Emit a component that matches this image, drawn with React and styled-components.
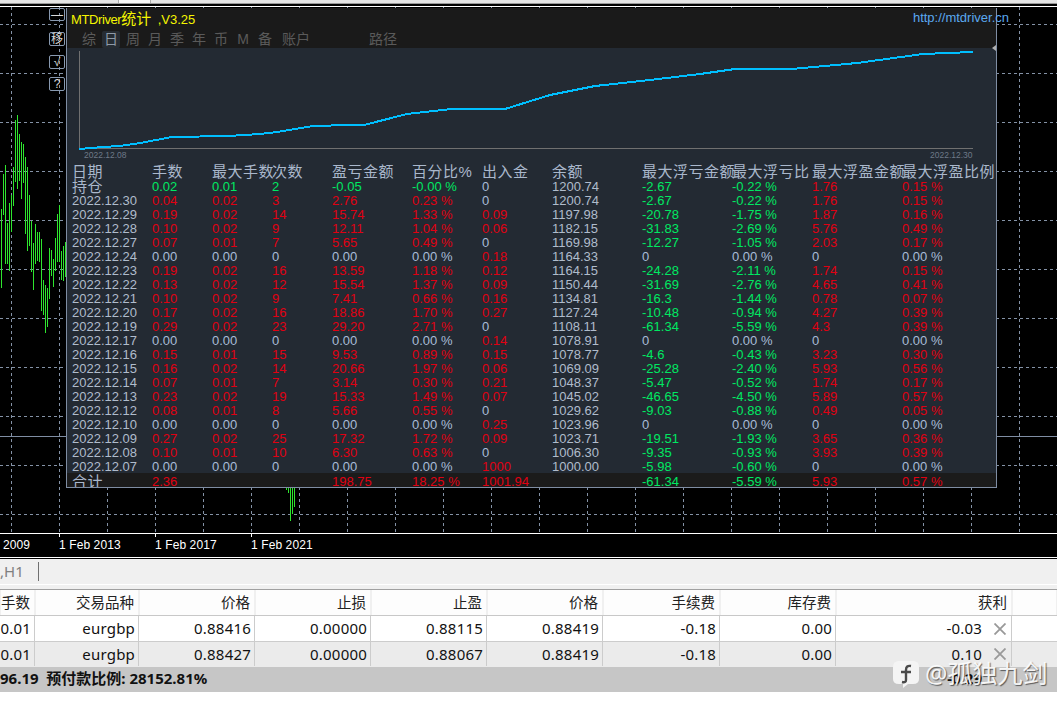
import React from 'react';
import styled, { createGlobalStyle } from 'styled-components';

const GlobalStyle = createGlobalStyle`
    html, body {
        margin: 0;
        padding: 0;
        background: #ffffff;
    }
`;

const PANEL_FONT = `"Liberation Sans", "Noto Sans CJK SC", sans-serif`;
const TABLE_FONT = `"Noto Sans", "Noto Sans CJK SC", sans-serif`;

const Page = styled.div`
    position: relative;
    width: 1057px;
    height: 716px;
    overflow: hidden;
    background: #ffffff;
`;

const TopStrip = styled.div`
    height: 3px;
    background: #e4e4e4;
    border-bottom: 1px solid #999999;
`;

const TopTab = styled.div`
    width: 31px;
    height: 3px;
    margin-left: 118px;
    background: #f8f8f8;
    border-left: 1px solid #aaaaaa;
    border-right: 1px solid #aaaaaa;
`;

const Rule = styled.div`
    height: ${props => props.$h}px;
    background: ${props => props.$color};
`;

const ChartArea = styled.div`
    position: relative;
    height: 526px;
    background: #000000;

    > svg {
        display: block;
    }
`;

const SideButtons = styled.div`
    position: absolute;
    top: 1px;
    left: 49px;
    display: flex;
    flex-direction: column;
`;

const SideButton = styled.div`
    box-sizing: border-box;
    width: 16px;
    height: ${props => props.$h || 14}px;
    margin-bottom: ${props => props.$gap}px;
    display: flex;
    align-items: center;
    justify-content: center;
    border: 1px solid #8899b0;
    border-radius: 2px;
    color: #d8d8d8;
    font: 12px/1 ${PANEL_FONT};
`;

const Panel = styled.div`
    position: absolute;
    top: 1px;
    left: 66px;
    box-sizing: border-box;
    width: 931px;
    height: 480px;
    display: flex;
    flex-direction: column;
    background: #232a33;
    border: 1px solid #7f8da3;
    border-top: none;
    font-family: ${PANEL_FONT};
`;

const PanelHead = styled.div`
    height: 40px;
    flex: none;
    background: #1a1a1a;
`;

const TitleRow = styled.div`
    height: 18px;
    display: flex;
    align-items: center;
    justify-content: space-between;
    padding-left: 4px;
`;

const Title = styled.div`
    color: #f5f500;
    font-size: 13px;
    letter-spacing: -0.4px;
    white-space: pre;

    span {
        font-size: 15px;
        letter-spacing: 0;
    }

    b {
        font-weight: 400;
        letter-spacing: 0;
    }
`;

const SiteLink = styled.div`
    margin-right: -13px;
    color: #5aa9f0;
    font-size: 13px;
`;

const Tabs = styled.div`
    display: flex;
    height: 17px;
    margin-top: 5px;
    padding-left: 11px;
`;

const Tab = styled.div`
    width: ${props => props.$w || 18}px;
    margin-left: ${props => props.$ml || 2}px;
    margin-right: 2px;
    text-align: center;
    font-size: 14px;
    line-height: 17px;
    border-radius: 2px;
    color: ${props => props.$active ? '#8e9aa8' : '#5a5a5a'};
    background: ${props => props.$active ? '#262c33' : 'transparent'};
`;

const CurveWrap = styled.div`
    height: 116px;
    flex: none;

    svg {
        display: block;
    }
`;

const Corner = styled.div`
    position: absolute;
    top: 37px;
    right: 0;
    width: 0;
    height: 0;
    border-top: 3px solid transparent;
    border-bottom: 3px solid transparent;
    border-right: 4px solid #b0b0b0;
`;

const GRID_COLS = '80px 60px 60px 60px 80px 70px 70px 90px 90px 80px 90px 1fr';

const StatRow = styled.div`
    flex: none;
    display: grid;
    grid-template-columns: ${GRID_COLS};
    height: ${props => props.$h || 14}px;
    line-height: ${props => props.$h || 14}px;
    padding-left: 5px;
    font-size: 13px;
    white-space: nowrap;
`;

const TotalRow = styled(StatRow)`
    box-sizing: border-box;
    height: 14px;
    margin-top: -1px;
    padding-top: 2px;
    overflow: hidden;
    background: #1b1b1b;
`;

const HeadCell = styled.div`
    min-width: 0;
    font-size: 15px;
    letter-spacing: 0.5px;
    color: #aab8cc;
`;

const toneColors = {
    red: '#e00012',
    green: '#00e862',
    zero: '#a9bcd8',
    plain: '#b0bccc',
};

const Cell = styled.div`
    min-width: 0;
    color: ${props => toneColors[props.$tone]};
`;

const CnCell = styled.div`
    min-width: 0;
    font-size: 15px;
    letter-spacing: 0.5px;
    color: #aab8cc;
`;

const Axis = styled.div`
    box-sizing: border-box;
    height: 24px;
    display: flex;
    background: #000000;
    border-top: 1px solid #ffffff;
`;

const AxisLabel = styled.div`
    position: relative;
    box-sizing: border-box;
    width: ${props => props.$w}px;
    padding-left: ${props => props.$pad || 0}px;
    padding-top: 4px;
    color: #ffffff;
    font: 12px/15px ${PANEL_FONT};
    letter-spacing: 0.1px;

    ${props => !props.$first && `
        &::before {
            content: '';
            position: absolute;
            top: 0;
            left: 0;
            width: 1px;
            height: 3px;
            background: #ffffff;
        }
    `}
`;

const Toolbar = styled.div`
    height: 25px;
    display: flex;
    align-items: center;
    background: #f0f0f0;
    color: #808080;
    font: 15px/1 ${TABLE_FONT};
`;

const ToolbarSep = styled.div`
    width: 1px;
    height: 19px;
    margin-left: 14px;
    background: #707070;
`;

const ORDER_COLS = '35px 104px 116px 116px 116px 116px 117px 116px 176px 45px';

const OrderHead = styled.div`
    display: grid;
    grid-template-columns: ${ORDER_COLS};
    box-sizing: border-box;
    height: 26px;
    background: #fdfdfd;
    border-bottom: 1px solid #c8c8c8;
`;

const OrderHeadCell = styled.div`
    box-sizing: border-box;
    padding-right: 4px;
    text-align: right;
    color: #222222;
    font: 14.5px/24px ${TABLE_FONT};
    border-left: 1px solid #f0f0f0;
    border-right: 1px solid #f0f0f0;
    white-space: nowrap;
`;

const OrderRow = styled.div`
    display: grid;
    grid-template-columns: ${ORDER_COLS};
    box-sizing: border-box;
    height: ${props => props.$alt ? 25 : 26}px;
    padding-bottom: ${props => props.$alt ? 1 : 0}px;
    background: ${props => props.$alt ? '#ebebeb' : '#ffffff'};
    border-bottom: ${props => props.$alt ? 'none' : '1px solid #cccccc'};
`;

const OrderCell = styled.div`
    box-sizing: border-box;
    display: flex;
    align-items: center;
    justify-content: flex-end;
    gap: 12px;
    padding-right: ${props => props.$pr || 3}px;
    color: #111111;
    font: 15px/1 ${TABLE_FONT};
    letter-spacing: 0.2px;
    border-right: 1px solid #cccccc;
    white-space: nowrap;
`;

const CloseIcon = styled.svg`
    width: 12px;
    height: 12px;
    flex: none;
`;

const StatusBar = styled.div`
    box-sizing: border-box;
    height: 25px;
    display: flex;
    align-items: center;
    justify-content: space-between;
    padding-right: 75px;
    padding-bottom: 2px;
    background: #c6c6c6;
    color: #111111;
    font: bold 15px/1 ${TABLE_FONT};
    white-space: pre;
`;

const Watermark = styled.div`
    position: absolute;
    top: 661px;
    left: 893px;
    display: flex;
    align-items: flex-start;
    gap: 6px;
    height: 27px;
    color: rgba(255, 255, 255, 0.92);
    font: 25px/24px ${TABLE_FONT};
    text-shadow: 1px 1px 1px rgba(0, 0, 0, 0.55);
    white-space: nowrap;
`;

const columns = ['日期', '手数', '最大手数', '次数', '盈亏金额', '百分比%', '出入金', '余额', '最大浮亏金额', '最大浮亏比', '最大浮盈金额', '最大浮盈比例'];

const rows = [
    ['2022.12.30', '0.04', '0.02', '3', '2.76', '0.23 %', '0', '1200.74', '-2.67', '-0.22 %', '1.76', '0.15 %'],
    ['2022.12.29', '0.19', '0.02', '14', '15.74', '1.33 %', '0.09', '1197.98', '-20.78', '-1.75 %', '1.87', '0.16 %'],
    ['2022.12.28', '0.10', '0.02', '9', '12.11', '1.04 %', '0.06', '1182.15', '-31.83', '-2.69 %', '5.76', '0.49 %'],
    ['2022.12.27', '0.07', '0.01', '7', '5.65', '0.49 %', '0', '1169.98', '-12.27', '-1.05 %', '2.03', '0.17 %'],
    ['2022.12.24', '0.00', '0.00', '0', '0.00', '0.00 %', '0.18', '1164.33', '0', '0.00 %', '0', '0.00 %'],
    ['2022.12.23', '0.19', '0.02', '16', '13.59', '1.18 %', '0.12', '1164.15', '-24.28', '-2.11 %', '1.74', '0.15 %'],
    ['2022.12.22', '0.13', '0.02', '12', '15.54', '1.37 %', '0.09', '1150.44', '-31.69', '-2.76 %', '4.65', '0.41 %'],
    ['2022.12.21', '0.10', '0.02', '9', '7.41', '0.66 %', '0.16', '1134.81', '-16.3', '-1.44 %', '0.78', '0.07 %'],
    ['2022.12.20', '0.17', '0.02', '16', '18.86', '1.70 %', '0.27', '1127.24', '-10.48', '-0.94 %', '4.27', '0.39 %'],
    ['2022.12.19', '0.29', '0.02', '23', '29.20', '2.71 %', '0', '1108.11', '-61.34', '-5.59 %', '4.3', '0.39 %'],
    ['2022.12.17', '0.00', '0.00', '0', '0.00', '0.00 %', '0.14', '1078.91', '0', '0.00 %', '0', '0.00 %'],
    ['2022.12.16', '0.15', '0.01', '15', '9.53', '0.89 %', '0.15', '1078.77', '-4.6', '-0.43 %', '3.23', '0.30 %'],
    ['2022.12.15', '0.16', '0.02', '14', '20.66', '1.97 %', '0.06', '1069.09', '-25.28', '-2.40 %', '5.93', '0.56 %'],
    ['2022.12.14', '0.07', '0.01', '7', '3.14', '0.30 %', '0.21', '1048.37', '-5.47', '-0.52 %', '1.74', '0.17 %'],
    ['2022.12.13', '0.23', '0.02', '19', '15.33', '1.49 %', '0.07', '1045.02', '-46.65', '-4.50 %', '5.89', '0.57 %'],
    ['2022.12.12', '0.08', '0.01', '8', '5.66', '0.55 %', '0', '1029.62', '-9.03', '-0.88 %', '0.49', '0.05 %'],
    ['2022.12.10', '0.00', '0.00', '0', '0.00', '0.00 %', '0.25', '1023.96', '0', '0.00 %', '0', '0.00 %'],
    ['2022.12.09', '0.27', '0.02', '25', '17.32', '1.72 %', '0.09', '1023.71', '-19.51', '-1.93 %', '3.65', '0.36 %'],
    ['2022.12.08', '0.10', '0.01', '10', '6.30', '0.63 %', '0', '1006.30', '-9.35', '-0.93 %', '3.93', '0.39 %'],
    ['2022.12.07', '0.00', '0.00', '0', '0.00', '0.00 %', '1000', '1000.00', '-5.98', '-0.60 %', '0', '0.00 %'],
];

const openRow = ['持仓', '0.02', '0.01', '2', '-0.05', '-0.00 %', '0', '1200.74', '-2.67', '-0.22 %', '1.76', '0.15 %'];
const totalRow = ['合计', '2.36', '', '', '198.75', '18.25 %', '1001.94', '', '-61.34', '-5.59 %', '5.93', '0.57 %'];

const toneOf = (value, col) => {
    if (col === 7) return 'plain';
    const n = parseFloat(value);
    if (n === 0) return 'zero';
    return n < 0 ? 'green' : 'red';
};

// equity curve, in screen coordinates
const curve = [
    [79, 149], [103, 147], [120, 146], [140, 143], [172, 137], [228, 136], [260, 134], [277, 132],
    [313, 126], [350, 125], [364, 125], [407, 114], [452, 109], [505, 109], [550, 95], [595, 86],
    [650, 80], [700, 74], [735, 69], [792, 69], [857, 63], [923, 54], [973, 52],
];

// bars as [x, top, bottom], read off the 3x view
const bars = [
    [4, 312, 548], [10, 207, 330], [16, 180, 476], [22, 354, 476], [28, 295, 497], [34, 270, 380],
    [40, 186, 303], [46, 45, 231], [52, 30, 252], [58, 87, 228], [64, 111, 282], [70, 117, 234],
    [76, 156, 387], [82, 186, 438], [88, 270, 423], [94, 347, 500], [100, 414, 555], [106, 357, 477],
    [112, 381, 468], [118, 381, 471], [124, 402, 618], [130, 525, 630], [136, 540, 684], [142, 549, 666],
    [148, 429, 582], [154, 435, 513], [160, 462, 546], [166, 399, 498], [172, 327, 471], [178, 300, 471],
    [184, 438, 525], [190, 423, 528], [196, 411, 516],
];

const lowerBars = [[286, 487, 490], [288, 487, 493], [290, 487, 521], [292, 487, 514], [294, 487, 507]];

const gridY = [24, 73, 122, 171, 220, 269, 318, 367, 416, 465, 514];
const gridX = Array.from({ length: 22 }, (_, i) => 11 + i * 48);

const PriceChart = () => (
    <svg width="1057" height="526" viewBox="0 7 1057 526" shapeRendering="crispEdges">
        {gridY.map(y => (
            <line key={y} x1="0" x2="1057" y1={y + 0.5} y2={y + 0.5} stroke="#8492a6" strokeDasharray="3 3" />
        ))}
        {gridX.map(x => (
            <line key={x} x1={x + 0.5} x2={x + 0.5} y1="7" y2="533" stroke="#8492a6" strokeDasharray="3 3" />
        ))}
        <line x1="0" x2="1057" y1="436.5" y2="436.5" stroke="#7f8da3" />
        {bars.map(([x, top, bottom]) => (
            <line key={x} x1={x / 3} x2={x / 3} y1={105 + top / 3} y2={105 + bottom / 3} stroke="#2ee62e" strokeWidth="1" />
        ))}
        {lowerBars.map(([x, top, bottom]) => (
            <line key={x} x1={x} x2={x} y1={top} y2={bottom} stroke="#2ee62e" strokeWidth="1" />
        ))}
    </svg>
);

const EquityCurve = () => (
    <svg width="929" height="116" viewBox="67 48 929 116">
        <g shapeRendering="crispEdges">
            <line x1="79.5" x2="79.5" y1="51" y2="149" stroke="#707070" />
            <line x1="79" x2="973" y1="148.5" y2="148.5" stroke="#707070" />
            <polyline points={curve.map(p => p.join(',')).join(' ')} fill="none" stroke="#00bfff" strokeWidth="2" />
        </g>
        <text x="84" y="158" fill="#6e7988" fontSize="8.5" fontFamily="Liberation Sans">2022.12.08</text>
        <text x="930" y="158" fill="#6e7988" fontSize="8.5" fontFamily="Liberation Sans">2022.12.30</text>
    </svg>
);

const tabs = ['综', '日', '周', '月', '季', '年', '币', 'M', '备'];

const orders = [
    ['0.01', 'eurgbp', '0.88416', '0.00000', '0.88115', '0.88419', '-0.18', '0.00', '-0.03'],
    ['0.01', 'eurgbp', '0.88427', '0.00000', '0.88067', '0.88419', '-0.18', '0.00', '0.10'],
];

const orderHeads = ['手数', '交易品种', '价格', '止损', '止盈', '价格', '手续费', '库存费', '获利', ''];

const App = () => {
    return (
        <Page>
            <GlobalStyle />
            <TopStrip><TopTab /></TopStrip>
            <Rule $h={2} $color="#000000" />
            <Rule $h={1} $color="#ffffff" />

            <ChartArea>
                <PriceChart />
                <SideButtons>
                    <SideButton $h={13} $gap={11}>—</SideButton>
                    <SideButton $gap={9}>移</SideButton>
                    <SideButton $gap={8}>√</SideButton>
                    <SideButton $gap={0}>?</SideButton>
                </SideButtons>

                <Panel>
                    <PanelHead>
                        <TitleRow>
                            <Title>MTDriver<span>统计</span>  <b>,V3.25</b></Title>
                            <SiteLink>http://mtdriver.cn</SiteLink>
                        </TitleRow>
                        <Tabs>
                            {tabs.map((tab, i) => (
                                <Tab key={tab} $active={i === 1}>{tab}</Tab>
                            ))}
                            <Tab $w={30} $ml={5}>账户</Tab>
                            <Tab $w={30} $ml={55}>路径</Tab>
                        </Tabs>
                    </PanelHead>
                    <Corner />
                    <CurveWrap><EquityCurve /></CurveWrap>

                    <StatRow $h={16}>
                        {columns.map(title => <HeadCell key={title}>{title}</HeadCell>)}
                    </StatRow>
                    <StatRow>
                        <CnCell>{openRow[0]}</CnCell>
                        {openRow.slice(1).map((value, i) => (
                            <Cell key={i} $tone={i < 5 ? 'green' : toneOf(value, i + 1)}>{value}</Cell>
                        ))}
                    </StatRow>
                    {rows.map(row => (
                        <StatRow key={row[0]}>
                            <Cell $tone="plain">{row[0]}</Cell>
                            {row.slice(1).map((value, i) => (
                                <Cell key={i} $tone={toneOf(value, i + 1)}>{value}</Cell>
                            ))}
                        </StatRow>
                    ))}
                    <TotalRow>
                        <CnCell>{totalRow[0]}</CnCell>
                        {totalRow.slice(1).map((value, i) => (
                            <Cell key={i} $tone={toneOf(value, i + 1)}>{value}</Cell>
                        ))}
                    </TotalRow>
                </Panel>
            </ChartArea>

            <Axis>
                <AxisLabel $w={59} $pad={3} $first>2009</AxisLabel>
                <AxisLabel $w={96}>1 Feb 2013</AxisLabel>
                <AxisLabel $w={96}>1 Feb 2017</AxisLabel>
                <AxisLabel $w={96}>1 Feb 2021</AxisLabel>
            </Axis>
            <Rule $h={1} $color="#ffffff" />
            <Rule $h={1} $color="#000000" />

            <Toolbar>,H1<ToolbarSep /></Toolbar>
            <Rule $h={1} $color="#ffffff" />
            <Rule $h={4} $color="#f0f0f0" />
            <Rule $h={1} $color="#a0a0a0" />

            <OrderHead>
                {orderHeads.map((title, i) => <OrderHeadCell key={i}>{title}</OrderHeadCell>)}
            </OrderHead>
            {orders.map((order, r) => (
                <OrderRow key={r} $alt={r === 1}>
                    {order.slice(0, 8).map((value, i) => <OrderCell key={i}>{value}</OrderCell>)}
                    <OrderCell $pr={5}>
                        {order[8]}
                        <CloseIcon viewBox="0 0 12 12">
                            <path d="M0.5 0.5 L11.5 11.5 M11.5 0.5 L0.5 11.5" stroke="#999999" strokeWidth="1.8" fill="none" />
                        </CloseIcon>
                    </OrderCell>
                    <div />
                </OrderRow>
            ))}
            <StatusBar>
                <span>96.19  预付款比例: 28152.81%</span>
                <span>-0.29</span>
            </StatusBar>

            <Watermark>
                <svg width="26" height="27" viewBox="0 0 26 27">
                    <path d="M6 0 H20 Q26 0 26 6 V18 Q26 23 20 23 H15 L10 27 V23 H6 Q0 23 0 18 V6 Q0 0 6 0 Z" fill="#f4f4f4" />
                    <path d="M18 5 Q13 4 13 9 V19 Q13 22 9 21 M8 11 H18" stroke="#4a4a4a" strokeWidth="2.4" fill="none" />
                </svg>
                <span>@孤独九剑</span>
            </Watermark>
        </Page>
    );
};

export default App;
